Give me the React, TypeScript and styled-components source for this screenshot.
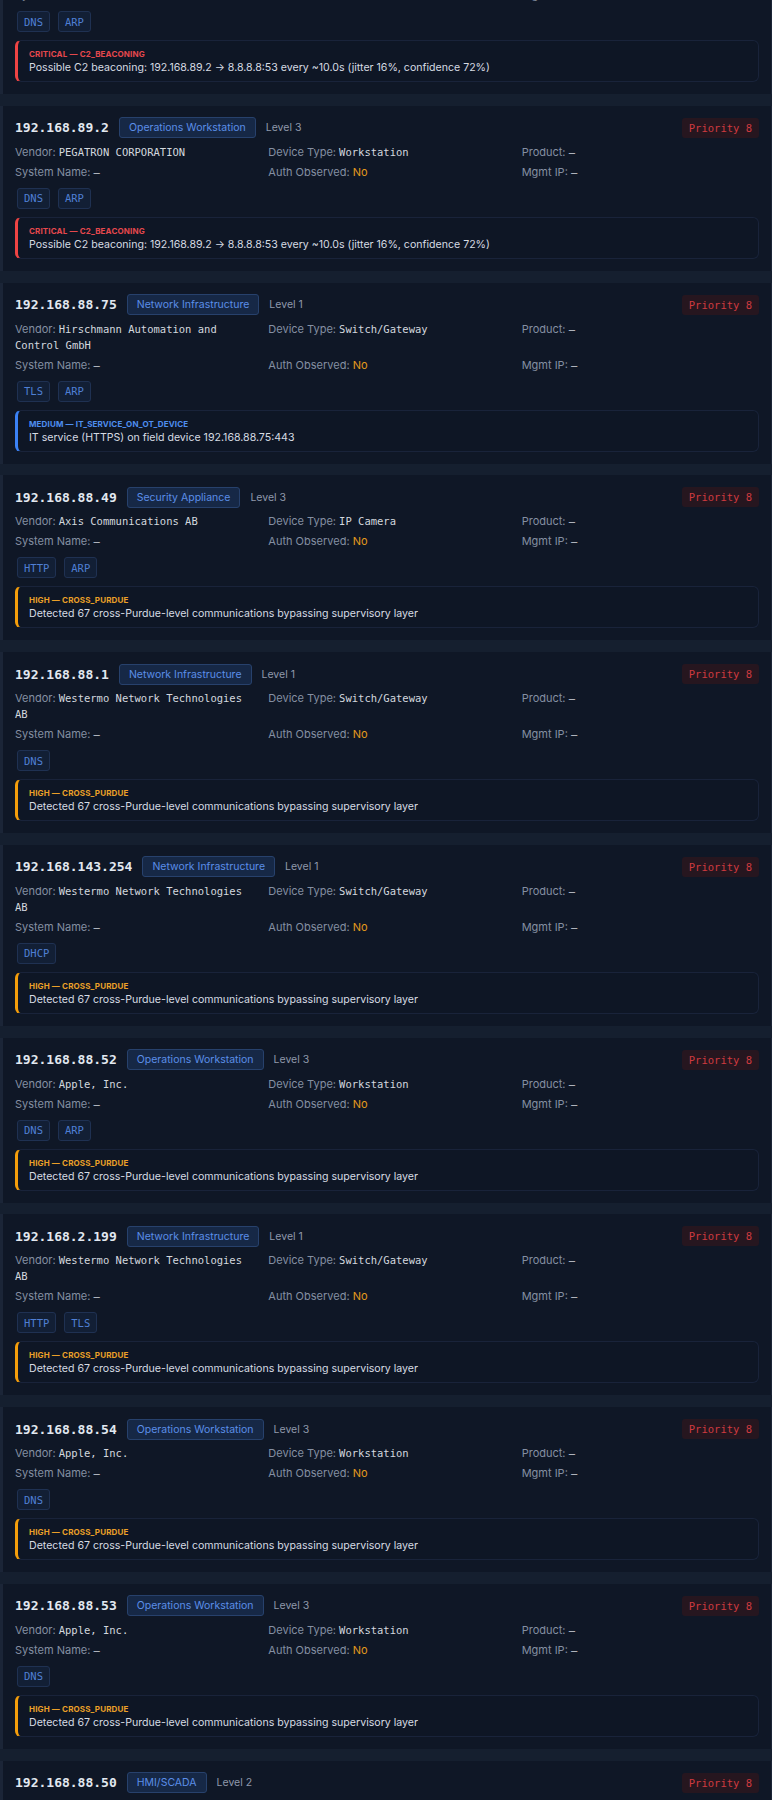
import React from 'react';
import styled, { createGlobalStyle } from 'styled-components';

const GlobalStyle = createGlobalStyle`
    html, body {
        margin: 0;
        padding: 0;
        background: #151f2f;
    }
    * {
        box-sizing: border-box;
    }
`;

const sans = `Inter, "Noto Sans", "Liberation Sans", sans-serif`;
const mono = `"DejaVu Sans Mono", "Liberation Mono", monospace`;

type Severity = 'critical' | 'high' | 'medium';

const severityColor: Record<Severity, string> = {
    critical: '#ef4444',
    high: '#f59e0b',
    medium: '#3b82f6',
};

const severityText: Record<Severity, string> = {
    critical: '#e5484d',
    high: '#eba028',
    medium: '#4f8ef0',
};

type Asset = {
    ip: string;
    role: string;
    level: number;
    vendor: string;
    deviceType: string;
    protocols: string[];
    severity: Severity;
    rule: string;
    message: string;
};

const beacon = 'Possible C2 beaconing: 192.168.89.2 → 8.8.8.8:53 every ~10.0s (jitter 16%, confidence 72%)';
const purdue = 'Detected 67 cross-Purdue-level communications bypassing supervisory layer';

const assets: Asset[] = [
    { ip: '192.168.89.1', role: 'Operations Workstation', level: 3, vendor: 'PEGATRON CORPORATION', deviceType: 'Workstation', protocols: ['DNS', 'ARP'], severity: 'critical', rule: 'C2_BEACONING', message: beacon },
    { ip: '192.168.89.2', role: 'Operations Workstation', level: 3, vendor: 'PEGATRON CORPORATION', deviceType: 'Workstation', protocols: ['DNS', 'ARP'], severity: 'critical', rule: 'C2_BEACONING', message: beacon },
    { ip: '192.168.88.75', role: 'Network Infrastructure', level: 1, vendor: 'Hirschmann Automation and Control GmbH', deviceType: 'Switch/Gateway', protocols: ['TLS', 'ARP'], severity: 'medium', rule: 'IT_SERVICE_ON_OT_DEVICE', message: 'IT service (HTTPS) on field device 192.168.88.75:443' },
    { ip: '192.168.88.49', role: 'Security Appliance', level: 3, vendor: 'Axis Communications AB', deviceType: 'IP Camera', protocols: ['HTTP', 'ARP'], severity: 'high', rule: 'CROSS_PURDUE', message: purdue },
    { ip: '192.168.88.1', role: 'Network Infrastructure', level: 1, vendor: 'Westermo Network Technologies AB', deviceType: 'Switch/Gateway', protocols: ['DNS'], severity: 'high', rule: 'CROSS_PURDUE', message: purdue },
    { ip: '192.168.143.254', role: 'Network Infrastructure', level: 1, vendor: 'Westermo Network Technologies AB', deviceType: 'Switch/Gateway', protocols: ['DHCP'], severity: 'high', rule: 'CROSS_PURDUE', message: purdue },
    { ip: '192.168.88.52', role: 'Operations Workstation', level: 3, vendor: 'Apple, Inc.', deviceType: 'Workstation', protocols: ['DNS', 'ARP'], severity: 'high', rule: 'CROSS_PURDUE', message: purdue },
    { ip: '192.168.2.199', role: 'Network Infrastructure', level: 1, vendor: 'Westermo Network Technologies AB', deviceType: 'Switch/Gateway', protocols: ['HTTP', 'TLS'], severity: 'high', rule: 'CROSS_PURDUE', message: purdue },
    { ip: '192.168.88.54', role: 'Operations Workstation', level: 3, vendor: 'Apple, Inc.', deviceType: 'Workstation', protocols: ['DNS'], severity: 'high', rule: 'CROSS_PURDUE', message: purdue },
    { ip: '192.168.88.53', role: 'Operations Workstation', level: 3, vendor: 'Apple, Inc.', deviceType: 'Workstation', protocols: ['DNS'], severity: 'high', rule: 'CROSS_PURDUE', message: purdue },
    { ip: '192.168.88.50', role: 'HMI/SCADA', level: 2, vendor: 'Siemens AG', deviceType: 'HMI', protocols: ['S7COMM'], severity: 'high', rule: 'CROSS_PURDUE', message: purdue },
];

const Viewport = styled.div`
    height: 100vh;
    overflow: hidden;
    background: #151f2f;
`;

// the list is scrolled a little, so the first card is cut off at the top
const List = styled.div`
    display: flex;
    flex-direction: column;
    gap: 11.75px;
    margin-top: -71px;
`;

const Card = styled.div`
    background: #0f1726;
    border-left: 3px solid #1b2537;
    border-right: 1px solid #1b2537;
    padding: 12px;
    font-family: ${sans};
`;

const Header = styled.div`
    display: flex;
    align-items: center;
    gap: 10px;
    height: 20px;
    margin-bottom: 6px;
`;

const Ip = styled.span`
    font-family: ${mono};
    font-weight: 700;
    font-size: 13px;
    color: #e2e8f0;
`;

const RoleTag = styled.span`
    display: inline-flex;
    align-items: center;
    height: 21px;
    padding: 0 9px;
    border: 1px solid #27416c;
    border-radius: 3px;
    background: #162846;
    color: #5b8ee8;
    font-size: 10.5px;
`;

const Level = styled.span`
    color: #8f99ab;
    font-size: 10.5px;
`;

const Priority = styled.span`
    margin-left: auto;
    display: inline-flex;
    align-items: center;
    height: 20px;
    padding: 0 7px;
    border-radius: 3px;
    background: #26161f;
    color: #cf3a3f;
    font-family: ${mono};
    font-size: 10.5px;
`;

const Details = styled.div`
    display: grid;
    grid-template-columns: repeat(3, 1fr);
    column-gap: 16px;
    row-gap: 4px;
`;

const Field = styled.div`
    font-size: 11px;
    line-height: 16px;
    color: #848fa2;
`;

const Value = styled.span<{ $mono?: boolean; $warn?: boolean }>`
    font-family: ${p => (p.$mono ? mono : sans)};
    font-size: ${p => (p.$mono ? '10.5px' : '11px')};
    line-height: 14px;
    color: ${p => (p.$warn ? '#e39a1d' : '#d3d8df')};
`;

const Protocols = styled.div`
    display: flex;
    gap: 8px;
    padding-left: 2px;
    margin: 8px 0;
`;

const Chip = styled.span`
    display: inline-flex;
    align-items: center;
    height: 21px;
    padding: 0 6px;
    border: 1px solid #1f3152;
    border-radius: 3px;
    background: #121f35;
    color: #4f7fd4;
    font-family: ${mono};
    font-size: 10.5px;
`;

const Alert = styled.div<{ $severity: Severity }>`
    height: 42px;
    padding: 7px 11px 0;
    border: 1px solid #19233a;
    border-left: 3px solid ${p => severityColor[p.$severity]};
    border-radius: 6px;
    background: #0e1625;
`;

const AlertTitle = styled.div<{ $severity: Severity }>`
    font-size: 8px;
    line-height: 12px;
    font-weight: 700;
    letter-spacing: 0.15px;
    color: ${p => severityText[p.$severity]};
`;

const AlertText = styled.div`
    font-size: 10.6px;
    line-height: 15px;
    color: #d6dbe3;
`;

const AssetCard: React.FC<{ asset: Asset }> = ({ asset }) => (
    <Card>
        <Header>
            <Ip>{asset.ip}</Ip>
            <RoleTag>{asset.role}</RoleTag>
            <Level>Level {asset.level}</Level>
            <Priority>Priority 8</Priority>
        </Header>
        <Details>
            <Field>Vendor: <Value $mono>{asset.vendor}</Value></Field>
            <Field>Device Type: <Value $mono>{asset.deviceType}</Value></Field>
            <Field>Product: <Value $mono>—</Value></Field>
            <Field>System Name: <Value $mono>—</Value></Field>
            <Field>Auth Observed: <Value $warn>No</Value></Field>
            <Field>Mgmt IP: <Value $mono>—</Value></Field>
        </Details>
        <Protocols>
            {asset.protocols.map(p => <Chip key={p}>{p}</Chip>)}
        </Protocols>
        <Alert $severity={asset.severity}>
            <AlertTitle $severity={asset.severity}>
                {asset.severity.toUpperCase()} — {asset.rule}
            </AlertTitle>
            <AlertText>{asset.message}</AlertText>
        </Alert>
    </Card>
);

const App: React.FC = () => (
    <>
        <GlobalStyle />
        <Viewport>
            <List>
                {assets.map(a => <AssetCard key={a.ip} asset={a} />)}
            </List>
        </Viewport>
    </>
);

export default App;
